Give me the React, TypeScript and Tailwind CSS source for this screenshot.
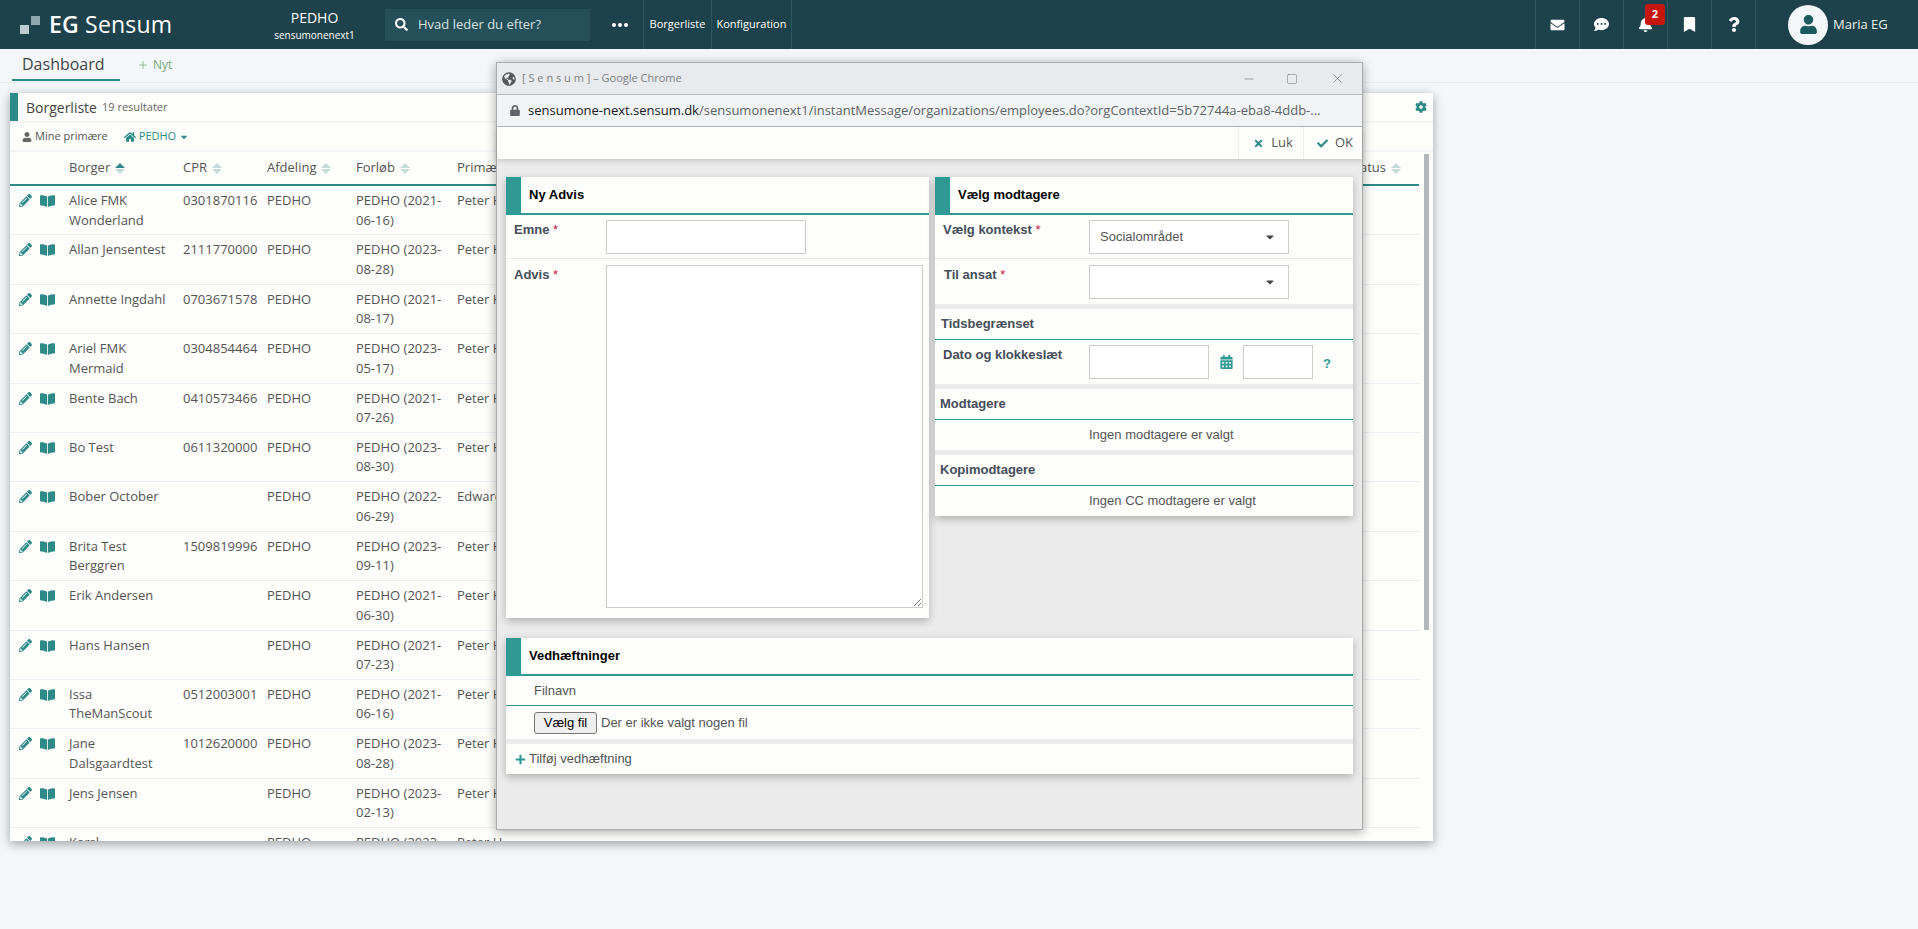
import { Bell, Bookmark, Check, Globe, Lock, Mail, Minus, Plus, Search, Square, X } from 'lucide-react';
import { FaBookOpen, FaCalendarAlt, FaCaretDown, FaCog, FaCommentDots, FaEnvelope, FaHome, FaPencilAlt, FaPlus, FaQuestion, FaTimes, FaUser, FaBell, FaBookmark, FaCheck, FaSearch, FaGlobeAmericas, FaLock } from 'react-icons/fa';

const rows = [
  { name: 'Alice FMK Wonderland', cpr: '0301870116', date: '2021-06-16', lead: 'Peter H' },
  { name: 'Allan Jensentest', cpr: '2111770000', date: '2023-08-28', lead: 'Peter H' },
  { name: 'Annette Ingdahl', cpr: '0703671578', date: '2021-08-17', lead: 'Peter H' },
  { name: 'Ariel FMK Mermaid', cpr: '0304854464', date: '2023-05-17', lead: 'Peter H' },
  { name: 'Bente Bach', cpr: '0410573466', date: '2021-07-26', lead: 'Peter H' },
  { name: 'Bo Test', cpr: '0611320000', date: '2023-08-30', lead: 'Peter H' },
  { name: 'Bober October', cpr: '', date: '2022-06-29', lead: 'Edward' },
  { name: 'Brita Test Berggren', cpr: '1509819996', date: '2023-09-11', lead: 'Peter H' },
  { name: 'Erik Andersen', cpr: '', date: '2021-06-30', lead: 'Peter H' },
  { name: 'Hans Hansen', cpr: '', date: '2021-07-23', lead: 'Peter H' },
  { name: 'Issa TheManScout', cpr: '0512003001', date: '2021-06-16', lead: 'Peter H' },
  { name: 'Jane Dalsgaardtest', cpr: '1012620000', date: '2023-08-28', lead: 'Peter H' },
  { name: 'Jens Jensen', cpr: '', date: '2023-02-13', lead: 'Peter H' },
  { name: 'Karsl', cpr: '', date: '2023-02-13', lead: 'Peter H' },
];

const SortArrows = ({ active }: { active?: boolean }) => (
  <span className="ml-[5px] inline-flex flex-col items-center gap-[1px] align-middle">
    <span className={`h-0 w-0 border-x-[5px] border-b-[5px] border-x-transparent ${active ? 'border-b-[#2d8a87]' : 'border-b-[#c5dbd9]'}`} />
    <span className="h-0 w-0 border-x-[5px] border-t-[5px] border-x-transparent border-t-[#c5dbd9]" />
  </span>
);

const TopIcon = ({ children }: { children: React.ReactNode }) => (
  <div className="relative flex h-full w-[44px] items-center justify-center border-r border-[#2c5560] text-white">{children}</div>
);

const SectionHead = ({ title }: { title: string }) => (
  <div className="flex h-[38px] items-center border-b-[2px] border-[#2f9a94] bg-[#fdfdfb]">
    <div className="h-full w-[15px] bg-[#2f9a94]" />
    <span className="ml-[8px] text-[13px] font-bold text-black">{title}</span>
  </div>
);

const SubHead = ({ title, indent }: { title: string; indent: string }) => (
  <div className={`flex h-[31px] items-center border-b border-[#2f9a94] bg-[#fdfdfb] text-[13px] font-bold text-[#454d59] ${indent}`}>{title}</div>
);

const Label = ({ text, indent = 'ml-[8px]' }: { text: string; indent?: string }) => (
  <span className={`text-[13px] font-bold text-[#454d59] ${indent}`}>
    {text} <span className="font-normal text-[#c02040]">*</span>
  </span>
);

const SelectBox = ({ value }: { value?: string }) => (
  <div className="flex h-[34px] w-[200px] items-center justify-between border border-[#ccc] bg-white pl-[10px] pr-[12px] text-[13px] text-[#555]">
    <span>{value}</span>
    <FaCaretDown className="h-[12px] w-[12px] text-[#444]" />
  </div>
);

const TextBox = ({ width }: { width: string }) => <div className={`h-[34px] border border-[#ccc] bg-white ${width}`} />;

const Modal = () => (
  <div className="absolute left-[496px] top-[62px] flex h-[768px] w-[867px] flex-col border border-[#a9abad] bg-[#ebebeb] font-['Liberation_Sans',sans-serif] shadow-[0_2px_10px_rgba(0,0,0,0.35)]">
    <div className="flex h-[31px] shrink-0 items-center bg-[#e8eaed] pl-[5px] font-['Open_Sans',sans-serif] text-[11px] text-[#7d8083]">
      <FaGlobeAmericas className="h-[14px] w-[14px] text-[#55585c]" />
      <span className="ml-[6px] flex-1">[ S e n s u m ] – Google Chrome</span>
      <Minus className="mr-[30px] h-[14px] w-[14px] text-[#666]" strokeWidth={1} />
      <Square className="mr-[32px] h-[12px] w-[12px] text-[#666]" strokeWidth={1} />
      <X className="mr-[17px] h-[15px] w-[15px] text-[#666]" strokeWidth={1} />
    </div>
    <div className="flex h-[33px] shrink-0 items-center border-y border-[#b5b7b9] bg-[#f1f3f4] pl-[13px] font-['Open_Sans',sans-serif] text-[13px] text-[#5f6368]">
      <FaLock className="h-[11px] w-[10px] text-[#5f6368]" />
      <span className="ml-[8px] text-[#202124]">sensumone-next.sensum.dk</span>
      <span>/sensumonenext1/instantMessage/organizations/employees.do?orgContextId=5b72744a-eba8-4ddb-...</span>
    </div>
    <div className="flex h-[32px] shrink-0 justify-end bg-[#fdfdfb] font-['Open_Sans',sans-serif] text-[13px] text-[#555] shadow-[0_2px_5px_rgba(0,0,0,0.15)]">
      <div className="flex items-center gap-[7px] border-l border-[#eee] pl-[14px] pr-[10px]">
        <FaTimes className="h-[11px] w-[11px] text-[#2d8a87]" />
        Luk
      </div>
      <div className="flex items-center gap-[7px] border-l border-[#eee] pl-[13px] pr-[9px]">
        <FaCheck className="h-[11px] w-[11px] text-[#2d8a87]" />
        OK
      </div>
    </div>

    <div className="flex gap-[6px] pl-[9px] pt-[18px]">
      <div className="h-[441px] w-[423px] bg-[#fdfdfb] shadow-[0_3px_8px_rgba(0,0,0,0.25)]">
        <SectionHead title="Ny Advis" />
        <div className="flex h-[44px] border-b border-[#eee] pt-[5px]">
          <div className="w-[100px]"><Label text="Emne" /></div>
          <TextBox width="w-[200px]" />
        </div>
        <div className="flex pt-[6px]">
          <div className="w-[100px]"><Label text="Advis" /></div>
          <div className="relative h-[343px] w-[317px] border border-[#ccc] bg-white">
            <svg className="absolute bottom-[1px] right-[1px] h-[8px] w-[8px]" viewBox="0 0 8 8" stroke="#777" fill="none"><path d="M1 8L8 1M5 8L8 5" /></svg>
          </div>
        </div>
      </div>

      <div className="h-[339px] w-[418px] bg-[#ebebeb] shadow-[0_3px_8px_rgba(0,0,0,0.25)]">
        <SectionHead title="Vælg modtagere" />
        <div className="flex h-[44px] border-b border-[#eee] bg-[#fdfdfb] pt-[5px]">
          <div className="w-[154px]"><Label text="Vælg kontekst" /></div>
          <SelectBox value="Socialområdet" />
        </div>
        <div className="flex h-[45px] bg-[#fdfdfb] pt-[6px]">
          <div className="w-[154px]"><Label text="Til ansat" indent="ml-[9px]" /></div>
          <SelectBox />
        </div>
        <div className="mt-[5px]"><SubHead title="Tidsbegrænset" indent="pl-[6px]" /></div>
        <div className="flex h-[44px] items-start bg-[#fdfdfb] pt-[5px]">
          <div className="w-[154px] pl-[8px] text-[13px] font-bold text-[#454d59]">Dato og klokkeslæt</div>
          <TextBox width="w-[120px]" />
          <FaCalendarAlt className="ml-[11px] mr-[10px] mt-[10px] h-[14px] w-[13px] text-[#2f9a94]" />
          <TextBox width="w-[70px]" />
          <span className="ml-[10px] mt-[9px] text-[13px] font-bold text-[#2f9a94]">?</span>
        </div>
        <div className="mt-[5px]"><SubHead title="Modtagere" indent="pl-[5px]" /></div>
        <div className="flex h-[30px] items-center bg-[#fdfdfb] pl-[154px] text-[13px] text-[#555]">Ingen modtagere er valgt</div>
        <div className="mt-[5px]"><SubHead title="Kopimodtagere" indent="pl-[5px]" /></div>
        <div className="flex h-[30px] items-center bg-[#fdfdfb] pl-[154px] text-[13px] text-[#555]">Ingen CC modtagere er valgt</div>
      </div>
    </div>

    <div className="ml-[9px] mt-[20px] w-[847px] bg-[#ebebeb] shadow-[0_3px_8px_rgba(0,0,0,0.25)]">
      <SectionHead title="Vedhæftninger" />
      <div className="flex h-[30px] items-center border-b border-[#3f8f8a] bg-[#fdfdfb] pl-[28px] text-[13px] text-[#555]">Filnavn</div>
      <div className="flex h-[33px] items-center bg-[#fdfdfb] pl-[28px] text-[13px] text-[#555]">
        <div className="flex h-[22px] w-[63px] items-center justify-center rounded-[3px] border border-[#767676] bg-[#efefef] text-black">Vælg fil</div>
        <span className="ml-[4px]">Der er ikke valgt nogen fil</span>
      </div>
      <div className="mt-[5px] flex h-[30px] items-center bg-[#fdfdfb] pl-[9px] text-[13px] text-[#555]">
        <FaPlus className="mr-[3px] h-[11px] w-[11px] text-[#2f9a94]" />
        Tilføj vedhæftning
      </div>
    </div>
  </div>
);

export default function App() {
  return (
    <div className="relative h-[929px] w-[1918px] overflow-hidden bg-[#f3f7fa] font-['Open_Sans',sans-serif] text-[13px] text-[#555]">
      <header className="flex h-[49px] items-center bg-[#1e424b] text-white">
        <div className="flex w-[258px] items-center pl-[20px]">
          <svg className="h-[18px] w-[20px]" viewBox="0 0 20 18">
            <rect x="0" y="9" width="9" height="9" fill="#b9cdd0" />
            <rect x="11" y="0" width="9" height="9" fill="#8ea9ad" />
          </svg>
          <span className="ml-[9px] text-[23px] tracking-[0.2px]"><span className="font-semibold">EG</span> Sensum</span>
        </div>
        <div className="flex w-[127px] flex-col items-center pr-[14px]">
          <span className="text-[14px] leading-[20px]">PEDHO</span>
          <span className="text-[10px] leading-[14px]">sensumonenext1</span>
        </div>
        <div className="flex h-[32px] w-[205px] items-center bg-[#265059] pl-[10px] text-[13px] text-[#d6e0e2]">
          <FaSearch className="h-[13px] w-[13px] text-white" />
          <span className="ml-[10px]">Hvad leder du efter?</span>
        </div>
        <div className="flex h-full w-[54px] items-center justify-center border-r border-[#2c5560] pl-[6px] text-white">
          <span className="flex gap-[2px]">
            <span className="h-[4px] w-[4px] rounded-full bg-white" />
            <span className="h-[4px] w-[4px] rounded-full bg-white" />
            <span className="h-[4px] w-[4px] rounded-full bg-white" />
          </span>
        </div>
        <div className="flex h-full w-[68px] items-center justify-center border-r border-[#2c5560] text-[11px]">Borgerliste</div>
        <div className="flex h-full w-[80px] items-center justify-center border-r border-[#2c5560] text-[11px]">Konfiguration</div>
        <div className="ml-auto flex h-full items-center">
          <div className="h-full border-r border-[#2c5560]" />
          <TopIcon><FaEnvelope className="h-[14px] w-[17px]" /></TopIcon>
          <TopIcon><FaCommentDots className="h-[15px] w-[17px]" /></TopIcon>
          <TopIcon>
            <FaBell className="h-[15px] w-[15px]" />
            <span className="absolute left-[21px] top-[4px] flex h-[21px] w-[20px] items-center justify-center rounded-[3px] bg-[#c5170d] text-[11px] font-bold text-white">2</span>
          </TopIcon>
          <TopIcon><FaBookmark className="h-[15px] w-[13px]" /></TopIcon>
          <TopIcon><FaQuestion className="h-[15px] w-[12px]" /></TopIcon>
          <div className="flex w-[162px] items-center pl-[32px]">
            <div className="flex h-[40px] w-[40px] items-center justify-center rounded-full bg-[#f3f7fa]">
              <FaUser className="h-[19px] w-[19px] text-[#1c5a60]" />
            </div>
            <span className="ml-[5px] text-[13px] text-[#e8f0f2]">Maria EG</span>
          </div>
        </div>
      </header>

      <div className="flex h-[34px] items-start border-b border-[#e8edf0] pl-[12px]">
        <div className="flex h-[32px] w-[108px] items-center border-b-[2px] border-[#2d8a87] pl-[10px] text-[16px] text-[#444]">Dashboard</div>
        <div className="ml-[17px] flex h-[31px] items-center gap-[4px] text-[12px] text-[#7aa87a]">
          <Plus className="h-[12px] w-[12px]" strokeWidth={1.5} />
          Nyt
        </div>
      </div>

      <section className="ml-[10px] mt-[10px] h-[748px] w-[1423px] overflow-hidden bg-[#fdfdfb] shadow-[0_3px_10px_rgba(0,0,0,0.35)]">
        <div className="flex h-[30px] items-center border-b-2 border-[#f2f4f6]">
          <div className="h-full w-[8px] bg-[#2d8a87]" />
          <span className="ml-[8px] text-[14px] text-[#444]">Borgerliste</span>
          <span className="ml-[5px] text-[11px] text-[#666]">19 resultater</span>
          <FaCog className="ml-auto mr-[6px] h-[12px] w-[12px] text-[#2d8a87]" />
        </div>
        <div className="flex h-[29px] items-center border-b-2 border-[#f2f4f6] pl-[12px] text-[11px]">
          <FaUser className="h-[10px] w-[10px] text-[#666]" />
          <span className="ml-[3px]">Mine primære</span>
          <FaHome className="ml-[16px] h-[12px] w-[12px] text-[#2d8a87]" />
          <span className="ml-[3px] text-[#2d8a87]">PEDHO</span>
          <FaCaretDown className="ml-[3px] h-[10px] w-[10px] text-[#2d8a87]" />
        </div>
        <div className="relative">
          <div className="flex h-[34px] w-[1409px] items-center border-b-[2px] border-[#2d8a87] text-[13px]">
            <div className="w-[59px]" />
            <div className="w-[114px]">Borger<SortArrows active /></div>
            <div className="w-[84px]">CPR<SortArrows /></div>
            <div className="w-[89px]">Afdeling<SortArrows /></div>
            <div className="w-[101px]">Forløb<SortArrows /></div>
            <div className="w-[100px]">Primær</div>
            <div className="ml-auto pr-[18px]">Status<SortArrows /></div>
          </div>
          {rows.map((row) => (
            <div key={row.name} className="flex h-[49.4px] w-[1409px] border-b border-[#eef0f6] pt-[5px] leading-[19.5px]">
              <div className="flex w-[59px] gap-[8px] pl-[9px] pt-[3px] text-[#2d8a87]">
                <FaPencilAlt className="h-[13px] w-[13px]" />
                <FaBookOpen className="h-[14px] w-[15px]" />
              </div>
              <div className="w-[114px] pr-[6px]">{row.name}</div>
              <div className="w-[84px]">{row.cpr}</div>
              <div className="w-[89px]">PEDHO</div>
              <div className="w-[101px]">PEDHO ({row.date})</div>
              <div className="w-[100px]">{row.lead}</div>
            </div>
          ))}
          <div className="absolute right-[4px] top-[2px] h-[476px] w-[5px] bg-[#b4b8bb]" />
        </div>
      </section>

      <Modal />
    </div>
  );
}
